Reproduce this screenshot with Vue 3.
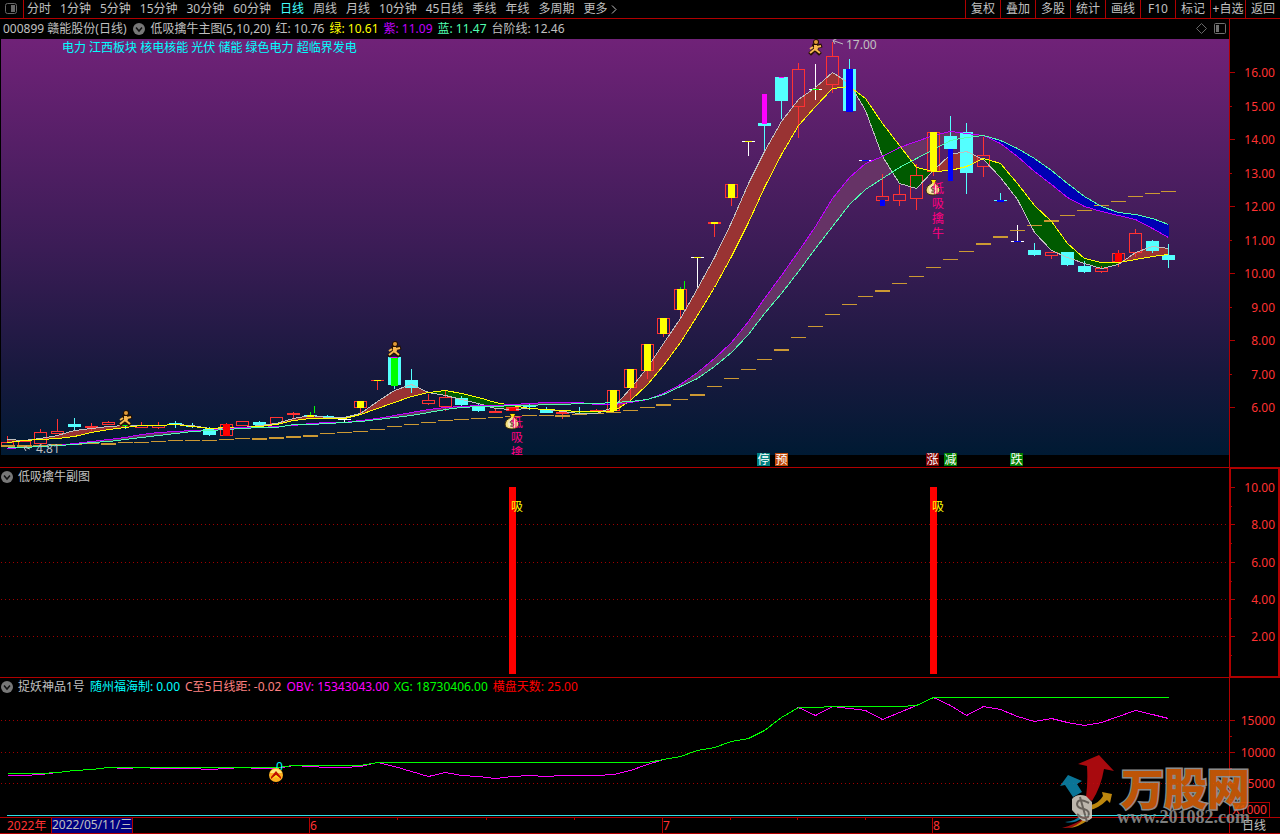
<script setup>
const periods = ['分时', '1分钟', '5分钟', '15分钟', '30分钟', '60分钟', '日线', '周线', '月线', '10分钟', '45日线', '季线', '年线', '多周期', '更多']
const tools = ['复权', '叠加', '多股', '统计', '画线', 'F10', '标记', '+自选', '返回']

const mainReadings = [
  { text: '红: 10.76', tone: 'plain' },
  { text: '绿: 10.61', tone: 'yellow' },
  { text: '紫: 11.09', tone: 'violet' },
  { text: '蓝: 11.47', tone: 'mint' },
  { text: '台阶线: 12.46', tone: 'plain' }
]
const volumeReadings = [
  { text: '随州福海制: 0.00', tone: 'cyan' },
  { text: 'C至5日线距: -0.02', tone: 'pink' },
  { text: 'OBV: 15343043.00', tone: 'magenta' },
  { text: 'XG: 18730406.00', tone: 'green' },
  { text: '横盘天数: 25.00', tone: 'red' }
]

const cx = n => Math.round(6.8 + 16.835 * n)
const px = n => cx(n) + 0.5

// [kind, body top, body bottom, high, low] per trading day
// kinds: h hollow rise, r filled rise, c filled fall, w unchanged
const days = [
  ['h', 442, 446, 436, 446], ['h', 441, 446, 441, 448], ['h', 432, 444, 429, 444], ['h', 431, 434, 419, 434],
  ['c', 424, 427, 418, 431], ['r', 426, 428, 423, 431], ['h', 422, 425, 421, 425], ['c', 425, 426, 425, 429],
  ['h', 425, 428, 422, 428], ['h', 425, 428, 422, 429], ['c', 423, 424, 421, 428], ['c', 426, 427, 423, 428],
  ['c', 429, 435, 427, 436], ['h', 424, 436, 423, 436], ['h', 421, 426, 421, 426], ['c', 422, 425, 421, 426],
  ['h', 417, 424, 417, 424], ['r', 413, 415, 412, 418], ['c', 415, 416, 412, 417], ['c', 416, 417, 415, 417],
  ['w', 419, 420, 419, 422], ['h', 401, 408, 401, 413], ['r', 380, 381, 380, 390], ['c', 357, 385, 357, 389],
  ['c', 380, 388, 369, 393], ['h', 400, 404, 394, 405], ['h', 397, 407, 390, 411], ['c', 398, 405, 396, 407],
  ['c', 407, 411, 403, 412], ['r', 411, 413, 408, 413], ['r', 407, 411, 407, 411], ['c', 406, 407, 403, 410],
  ['c', 409, 413, 407, 413], ['h', 412, 414, 411, 419], ['c', 411, 412, 407, 413], ['r', 410, 412, 409, 412],
  ['h', 390, 411, 390, 411], ['h', 369, 388, 369, 400], ['h', 344, 371, 344, 379], ['h', 318, 334, 318, 337],
  ['h', 289, 310, 289, 317], ['w', 257, 258, 257, 288], ['r', 222, 224, 222, 237], ['h', 184, 198, 184, 206],
  ['w', 141, 142, 141, 156], ['c', 123, 126, 123, 151], ['c', 77, 101, 77, 119], ['h', 69, 107, 63, 138],
  ['w', 89, 90, 64, 100], ['h', 56, 85, 42, 93], ['c', 69, 111, 59, 111], ['w', 160, 161, 160, 161],
  ['h', 196, 201, 174, 201], ['h', 194, 201, 185, 206], ['h', 175, 199, 164, 210], ['h', 132, 172, 132, 176],
  ['c', 136, 149, 116, 149], ['c', 132, 173, 123, 194], ['h', 155, 167, 137, 177], ['c', 200, 201, 193, 201],
  ['w', 241, 242, 225, 242], ['c', 250, 255, 243, 256], ['h', 252, 256, 252, 259], ['c', 252, 265, 252, 266],
  ['c', 266, 272, 261, 273], ['h', 268, 272, 266, 273], ['h', 253, 262, 250, 267], ['h', 233, 253, 229, 257],
  ['c', 241, 251, 240, 253], ['c', 255, 260, 244, 268]
]
const candles = days.map(([kind, top, bottom, high, low], n) => ({ kind, top, bottom, high, low, x: cx(n) }))

// Signal bars painted over the candles: [day, offset, width, top, bottom, tone]
const signals = [
  [13, -3, 7, 424, 436, 'red'], [18, 4, 1, 406, 413, 'green'], [18, -3, 7, 415, 417, 'yellow'], [18, 0, 1, 412, 415, 'green'],
  [7, -3, 7, 425, 426, 'green'], [21, -3, 7, 401, 408, 'yellow'], [22, -3, 7, 380, 381, 'yellow'], [23, -3, 7, 357, 386, 'green'],
  [23, -3, 7, 357, 358, 'magenta'], [30, -3, 7, 408, 411, 'red'], [36, -3, 7, 390, 411, 'yellow'], [37, -3, 7, 369, 388, 'yellow'],
  [38, -3, 7, 344, 371, 'yellow'], [39, -3, 7, 318, 334, 'yellow'], [40, -3, 7, 289, 310, 'yellow'], [40, 0, 1, 287, 289, 'green'],
  [40, 4, 1, 281, 289, 'green'], [41, -3, 7, 257, 258, 'yellow'], [42, -3, 7, 222, 224, 'yellow'], [43, -3, 7, 184, 198, 'yellow'],
  [44, -3, 7, 141, 142, 'yellow'], [45, -2, 5, 94, 124, 'magenta'], [46, -2, 5, 77, 78, 'magenta'], [48, -3, 7, 89, 90, 'green'],
  [50, -3, 7, 69, 112, 'blue'], [51, -3, 7, 160, 161, 'blue'], [52, -2, 5, 200, 206, 'blue'], [55, -3, 7, 132, 171, 'yellow'],
  [56, -2, 5, 149, 181, 'blue'], [59, -3, 7, 200, 202, 'blue'], [60, -3, 7, 241, 242, 'blue'], [66, -3, 7, 253, 262, 'red']
].map(([n, dx, w, top, bottom, tone]) => ({ x: cx(n) + dx, w, top, h: bottom - top, tone }))

const ma5 = [439, 440, 438, 435, 430, 428, 426, 425, 425, 425, 424, 425, 428, 428, 427, 425, 423, 418, 415, 417, 417, 413, 401, 390, 384, 392, 395, 399, 403, 408, 409, 408, 409, 411, 413, 413, 407, 388, 367, 343, 318, 288, 257, 222, 183, 151, 121, 99, 87, 72, 83, 110, 156, 183, 188, 170, 154, 151, 159, 177, 199, 232, 250, 257, 263, 268, 264, 252, 246, 248]
const ma10 = [442, 440, 439, 438, 436, 432, 429, 427, 425, 425, 424, 426, 428, 427, 427, 426, 424, 420, 418, 418, 418, 414, 408, 402, 396, 392, 390, 393, 397, 402, 405, 408, 409, 410, 411, 411, 411, 400, 384, 365, 342, 315, 287, 256, 222, 187, 154, 125, 106, 88, 86, 98, 123, 145, 167, 171, 170, 166, 158, 163, 183, 205, 221, 243, 258, 262, 262, 259, 256, 254]
const fast = [448, 447, 446, 445, 443, 441, 439, 437, 434, 432, 431, 430, 430, 428, 427, 427, 426, 425, 423, 422, 422, 420, 418, 415, 412, 409, 407, 406, 405, 405, 404, 403, 402, 402, 402, 404, 404, 402, 399, 393, 384, 372, 358, 342, 321, 298, 275, 251, 226, 198, 177, 163, 156, 147, 141, 135, 131, 133, 135, 143, 156, 171, 184, 197, 206, 211, 215, 219, 228, 237]
const slow = [447, 447, 446, 445, 444, 442, 441, 439, 437, 435, 433, 431, 430, 429, 428, 427, 427, 424, 424, 423, 422, 421, 419, 417, 415, 412, 409, 407, 406, 406, 405, 405, 404, 404, 403, 403, 402, 401, 399, 394, 386, 378, 366, 352, 334, 313, 293, 271, 248, 226, 204, 189, 178, 167, 158, 149, 140, 137, 135, 140, 148, 158, 170, 183, 196, 206, 212, 214, 218, 224]
const steps = [445, 445, 445, 444, 444, 443, 443, 442, 442, 441, 440, 440, 440, 439, 438, 438, 437, 436, 435, 433, 432, 431, 429, 426, 424, 422, 420, 419, 418, 417, 416, 415, 415, 415, 414, 413, 412, 410, 407, 404, 399, 394, 386, 378, 369, 359, 349, 337, 326, 314, 304, 296, 290, 283, 276, 267, 259, 251, 243, 236, 230, 225, 220, 215, 210, 205, 201, 196, 193, 191]
const thickSteps = new Set([0, 1, 2, 6, 15, 16, 17, 18, 33, 39, 41, 46, 52, 58, 59, 62])

const line = ys => ys.map((y, n) => `${px(n)},${y + 0.5}`).join(' ')

// Area between two curves, split where they cross
function bands(a, b) {
  const above = []
  const below = []
  for (let n = 0; n < a.length - 1; n++) {
    const d0 = b[n] - a[n]
    const d1 = b[n + 1] - a[n + 1]
    const x0 = px(n)
    const x1 = px(n + 1)
    if (d0 * d1 < 0) {
      const t = d0 / (d0 - d1)
      const xm = x0 + (x1 - x0) * t
      const ym = a[n] + (a[n + 1] - a[n]) * t
      ;(d0 > 0 ? above : below).push(`M${x0} ${a[n]}L${xm} ${ym}L${x0} ${b[n]}Z`)
      ;(d1 > 0 ? above : below).push(`M${x1} ${a[n + 1]}L${xm} ${ym}L${x1} ${b[n + 1]}Z`)
    } else if (d0 + d1 !== 0) {
      ;(d0 + d1 > 0 ? above : below).push(`M${x0} ${a[n]}L${x1} ${a[n + 1]}L${x1} ${b[n + 1]}L${x0} ${b[n]}Z`)
    }
  }
  return { above: above.join(''), below: below.join('') }
}
const shortBand = bands(ma5, ma10)
const longBand = bands(fast, slow)

const xg = [773, 773, 773, 772, 770, 769, 767, 767, 767, 767, 767, 767, 767, 767, 767, 767, 767, 765, 765, 765, 765, 765, 762, ...Array(16).fill(762), 759, 756, 750, 747, 741, 738, 730, 717, 707, 707, 706, 706, 706, 706, 706, 705, ...Array(15).fill(697)]
const obv = [775, 775, 774, 772, 770, 769, 767, 768, 767, 768, 768, 768, 769, 768, 767, 768, 768, 765, 766, 767, 767, 766, 762, 766, 771, 776, 772, 775, 776, 778, 776, 775, 776, 775, 775, 775, 774, 770, 764, 759, 756, 750, 747, 741, 738, 730, 717, 707, 715, 706, 708, 710, 719, 712, 705, 697, 705, 715, 706, 709, 716, 721, 718, 722, 725, 722, 716, 710, 714, 718]

const priceTicks = [
  [72, '16.00'], [106, '15.00'], [139, '14.00'], [173, '13.00'], [206, '12.00'], [240, '11.00'],
  [273, '10.00'], [307, '9.00'], [340, '8.00'], [374, '7.00'], [407, '6.00']
]
const signalTicks = [[487, '10.00'], [524, '8.00'], [562, '6.00'], [599, '4.00'], [636, '2.00']]
const volumeTicks = [[720, '15000'], [752, '10000'], [783, '5000']]

const tags = [
  { x: 757, text: '停', fill: '#008080' }, { x: 775, text: '预', fill: '#c04808' }, { x: 926, text: '涨', fill: '#800000' },
  { x: 944, text: '减', fill: '#008000' }, { x: 1010, text: '跌', fill: '#008000' }
]
const runners = [[119, 411], [388, 342], [809, 40]]
const bags = [[505, 414], [926, 180]]
const calls = [
  { x: 511, y: 427, chars: ['低', '吸', '擒'] },
  { x: 932, y: 193, chars: ['低', '吸', '擒', '牛'] }
]
const months = [[309, '6'], [662, '7'], [932, '8']]
const weekTicks = [397, 486, 574, 730, 797, 865]
</script>

<template>
  <div class="terminal">
    <nav class="toolbar">
      <button class="layout-btn" aria-label="布局">
        <svg width="13" height="12" viewBox="0 0 13 12"><rect x=".5" y=".5" width="11" height="10" rx="2" fill="none" stroke="#686868" /><rect x="6" y="2" width="4" height="7" fill="#686868" /></svg>
      </button>
      <div class="periods">
        <button v-for="p in periods" :key="p" :class="{ active: p === '日线' }">{{ p }}</button>
        <svg class="more" width="6" height="9" viewBox="0 0 6 9"><path d="M1 .5L5 4.500L1 8.500" fill="none" stroke="#c0c0c0" /></svg>
      </div>
      <div class="tools">
        <button v-for="t in tools" :key="t">{{ t }}</button>
      </div>
    </nav>

    <section class="panel">
      <div class="plot">
        <header class="info tall">
          <span>000899 赣能股份(日线)</span>
          <button class="fold" aria-label="指标菜单"><svg viewBox="0 0 12 12"><circle cx="6" cy="6" r="6" fill="#787878" /><path d="M3 4.500L6 8L9 4.500" fill="none" stroke="#111" stroke-width="1.500" /></svg></button>
          <span>低吸擒牛主图(5,10,20)</span>
          <span v-for="r in mainReadings" :key="r.text" :class="r.tone">{{ r.text }}</span>
          <svg class="corner" width="30" height="12" viewBox="0 0 30 12">
            <path d="M5.500 .5L10.500 5.500L5.500 10.500L.5 5.500Z" fill="none" stroke="#686868" />
            <rect x="18.500" y=".5" width="11" height="10" rx="1" fill="none" stroke="#707070" /><rect x="20" y="2" width="3" height="7" fill="#707070" />
          </svg>
        </header>
        <svg class="chart" viewBox="0 39 1229 428" preserveAspectRatio="none">
          <defs>
            <linearGradient id="dusk" x1="0" y1="0" x2="0" y2="1">
              <stop offset="0" stop-color="#702278" /><stop offset=".5" stop-color="#3b1c56" /><stop offset=".8" stop-color="#18193e" /><stop offset="1" stop-color="#001a33" />
            </linearGradient>
            <clipPath id="sky"><rect x="1" y="39" width="1228" height="416" /></clipPath>
          </defs>
          <rect x="1" y="39" width="1228" height="416" fill="url(#dusk)" />
          <text class="cyan" x="62" y="52">电力 江西板块 核电核能 光伏 储能 绿色电力 超临界发电</text>
          <g clip-path="url(#sky)" shape-rendering="crispEdges">
            <path :d="longBand.above" fill="#663366" />
            <path :d="longBand.below" fill="#0000b4" />
            <path :d="shortBand.above" fill="#993333" />
            <path :d="shortBand.below" fill="#005a00" />
            <g v-for="c in candles" :key="c.x" :class="['candle', c.kind]">
              <rect v-if="c.top > c.high" :x="c.x" :y="c.high" width="1" :height="c.top - c.high" />
              <rect v-if="c.low > c.bottom" :x="c.x" :y="c.bottom" width="1" :height="c.low - c.bottom" />
              <rect v-if="c.kind === 'h'" class="hollow" :x="c.x - 5.5" :y="c.top + 0.5" width="12" :height="c.bottom - c.top - 1" />
              <rect v-else :x="c.x - 6" :y="c.top" width="13" :height="c.bottom - c.top" />
            </g>
            <rect v-for="(y, n) in steps" :key="n" :x="cx(n) - 7" :y="y" width="15" :height="thickSteps.has(n) ? 2 : 1" fill="#cc9933" />
            <g fill="none">
              <polyline :points="line(ma5)" stroke="#c0c0c0" />
              <polyline :points="line(ma10)" stroke="#ffff00" />
              <polyline :points="line(fast)" stroke="#c000ff" />
              <polyline :points="line(slow)" stroke="#50ffb0" />
            </g>
            <rect v-for="(s, i) in signals" :key="i" :class="s.tone" :x="s.x" :y="s.top" :width="s.w" :height="s.h" />
          </g>
          <g fill="none" stroke="#c0c0c0">
            <path d="M843 44L833 40.500M837 38.500L833 40.500L835 44" />
            <path d="M30 449L24 447M27 446L24 447.500L26 451" />
          </g>
          <text x="846" y="49">17.00</text>
          <text x="36" y="453">4.81</text>
          <g v-for="[x, y] in runners" :key="x" :transform="`translate(${x} ${y})`">
            <g fill="none" stroke="#241000" stroke-width="4" stroke-linecap="square"><path d="M7 6L6 9L2 13M6 9L10 13M5 6L8 7L11 6" /><circle cx="7" cy="2" r="1" /></g>
            <g fill="none" stroke="#f8b850" stroke-width="2"><path d="M4 7L1 9" /><path d="M6 9L1 13M6 9L11 13M8 7L12 6" /></g>
            <path d="M5 5H8L9 9L7 11L5 9Z" fill="#f8b850" />
            <circle cx="7" cy="2" r="2" fill="#e09a38" />
          </g>
          <g v-for="[x, y] in bags" :key="x" :transform="`translate(${x} ${y})`">
            <path d="M5 0H10L9 3Q14 6 14 10Q13 15 7 15Q0 15 0 10Q0 6 6 3Z" fill="#f2e184" stroke="#3a2800" />
            <path d="M5 0H10L8 4Z" fill="#ffe800" />
            <circle cx="7" cy="9.500" r="4" fill="#f8edc8" />
            <path d="M9 7Q5 6 5 8Q5 9 7 9.500Q9 10 9 11Q8 13 5 12M7 6V13" fill="none" stroke="#70502c" />
          </g>
          <g class="call" clip-path="url(#sky)">
            <template v-for="c in calls" :key="c.x">
              <text v-for="(ch, i) in c.chars" :key="ch" :x="c.x" :y="c.y + i * 15">{{ ch }}</text>
            </template>
          </g>
          <g v-for="t in tags" :key="t.x">
            <rect :x="t.x" y="453" width="13" height="13" :fill="t.fill" />
            <text class="white" :x="t.x + 0.5" y="464">{{ t.text }}</text>
          </g>
        </svg>
      </div>
      <svg class="axis" viewBox="1229 19 51 448" preserveAspectRatio="none">
        <path class="rule" d="M1229.500 19V467" />
        <g v-for="([y, label], i) in priceTicks" :key="label">
          <path class="rule" :d="`M1230 ${y + 0.5}H${i % 2 ? 1232 : 1235}`" />
          <text x="1275" :y="y + 5">{{ label }}</text>
        </g>
      </svg>
    </section>

    <section class="panel">
      <div class="plot">
        <header class="info">
          <button class="fold" aria-label="指标菜单"><svg viewBox="0 0 12 12"><circle cx="6" cy="6" r="6" fill="#787878" /><path d="M3 4.500L6 8L9 4.500" fill="none" stroke="#111" stroke-width="1.500" /></svg></button>
          <span>低吸擒牛副图</span>
        </header>
        <svg class="chart" viewBox="0 485 1229 192" preserveAspectRatio="none">
          <path v-for="[y] in signalTicks.slice(1)" :key="y" class="grid" :d="`M1 ${y + 0.5}H1229`" />
          <g v-for="x in [509, 930]" :key="x">
            <rect class="red" :x="x" y="487" width="7" height="187" />
            <text class="yellow" :x="x + 2" y="511">吸</text>
          </g>
        </svg>
      </div>
      <svg class="axis" viewBox="1229 468 51 209" preserveAspectRatio="none">
        <path class="rule" d="M1229 468.500H1280M1229 676.500H1280" />
        <path class="rule" stroke-width="2" d="M1230 468V677M1279 468V677" />
        <g v-for="[y, label] in signalTicks" :key="label">
          <path class="rule" :d="`M1230 ${y + 0.5}H1235M1230 ${y + 19.5}H1232`" />
          <text x="1275" :y="y + 5">{{ label }}</text>
        </g>
      </svg>
    </section>

    <section class="panel last">
      <div class="plot">
        <header class="info">
          <button class="fold" aria-label="指标菜单"><svg viewBox="0 0 12 12"><circle cx="6" cy="6" r="6" fill="#787878" /><path d="M3 4.500L6 8L9 4.500" fill="none" stroke="#111" stroke-width="1.500" /></svg></button>
          <span>捉妖神品1号</span>
          <span v-for="r in volumeReadings" :key="r.text" :class="r.tone">{{ r.text }}</span>
        </header>
        <svg class="chart" viewBox="0 695 1229 122" preserveAspectRatio="none">
          <path v-for="[y] in volumeTicks" :key="y" class="grid" :d="`M1 ${y + 0.5}H1229`" />
          <g fill="none" shape-rendering="crispEdges">
            <polyline :points="line(obv)" stroke="#ff00ff" />
            <polyline :points="line(xg)" stroke="#00ff00" />
            <path d="M7 815.500H1169" stroke="#30e0e8" />
          </g>
          <text class="cyan" x="276" y="771">0</text>
          <circle cx="276" cy="775" r="7" fill="#ffb020" /><path d="M270 773A6.500 6.500 0 0 1 282 773Z" fill="#ffe878" />
          <path d="M271 777L276 771L281 777L281 779L276 775L271 779Z" fill="#c01000" /><path d="M276 775L280 778.500L276 777L272 778.500Z" fill="#ffe020" />
        </svg>
      </div>
      <svg class="axis" viewBox="1229 678 51 139" preserveAspectRatio="none">
        <path class="rule" d="M1229.500 678V817M1229 802.500H1269.500V817" />
        <g v-for="[y, label] in volumeTicks" :key="label">
          <path class="rule" :d="`M1230 ${y + 0.5}H1235M1230 ${y + 16.5}H1232`" />
          <text x="1275" :y="y + 5">{{ label }}</text>
        </g>
        <text x="1267" y="814">X1000</text>
      </svg>
    </section>

    <footer class="dates">
      <svg class="chart" viewBox="0 818 1229 15" preserveAspectRatio="none">
        <text class="tick" x="7" y="830">2022年</text>
        <rect x="51" y="818" width="82" height="15" fill="#000080" />
        <path class="rule" d="M51.500 818V833M132.500 818V833" />
        <text x="52" y="829">2022/05/11/三</text>
        <g v-for="[x, m] in months" :key="m">
          <path class="rule" :d="`M${x + 0.5} 818V833`" />
          <text class="tick" :x="x + 1" y="830">{{ m }}</text>
        </g>
        <path v-for="x in weekTicks" :key="x" class="rule" :d="`M${x + 0.5} 818V820`" />
      </svg>
      <span class="cycle">日线</span>
    </footer>

    <svg class="brand" width="204" height="80" viewBox="1056 752 204 80" opacity=".88">
      <path d="M1068 775L1060 786L1065 785L1073 797L1082 792L1077 784L1082 781Z" fill="#0c86ac" />
      <path d="M1099 755L1078 764L1087 766Q1088 783 1086 797L1092 801Q1101 787 1104 769L1114 771Z" fill="#c00c10" />
      <path d="M1102 792L1112 794L1110 803L1107 800Q1099 808 1090 810L1091 805Q1099 803 1103 796Z" fill="#d89a10" />
      <path d="M1087 816Q1077 824 1062 828Q1074 829 1086 821Z" fill="#b01010" />
      <path d="M1083 814Q1076 821 1065 822Q1074 824 1082 818Z" fill="#1088b0" />
      <path d="M1085 818Q1077 826 1069 828Q1079 827 1088 820Z" fill="#d89a10" />
      <path d="M1072 799Q1077 793 1086 796L1092 802L1092 818Q1086 824 1080 819L1072 810Z" fill="#d8d0c4" />
      <path d="M1089 803Q1078 797 1077 804Q1077 808 1084 809Q1091 811 1088 817Q1083 820 1077 814M1080 797L1087 822" fill="none" stroke="#756e66" stroke-width="2" />
      <text class="wordmark" x="1121" y="805">万股网</text>
      <text class="domain" x="1117" y="823">www.201082.com</text>
    </svg>
  </div>
</template>

<style>
html,
body {
  background: #000;
}
</style>

<style scoped>
.terminal {
  position: relative;
  display: grid;
  grid-template-rows: 19px 449fr 210fr 139fr 17px;
  height: 100vh;
  min-height: 560px;
  overflow: hidden;
  background: #000;
  color: #c0c0c0;
  font: 12px/16px "Noto Sans", "Noto Sans CJK SC", sans-serif;
}
button {
  padding: 0;
  border: 0;
  background: none;
  color: inherit;
  font: inherit;
  white-space: nowrap;
  cursor: pointer;
}
.toolbar {
  display: flex;
  border-bottom: 1px solid #b00000;
}
.layout-btn {
  width: 24px;
  padding-left: 5px;
  border-right: 1px solid #b00000;
  text-align: left;
}
.layout-btn svg {
  display: block;
}
.periods {
  display: flex;
  flex: 1;
  align-items: center;
  gap: 9px;
  min-width: 0;
  padding-left: 3px;
  overflow: hidden;
}
.periods .active {
  color: #4ff;
}
.more {
  margin-left: -6px;
}
.tools {
  display: flex;
}
.tools button {
  width: 35px;
  border-left: 1px solid #b00000;
}
.panel {
  display: grid;
  grid-template-columns: 1fr 51px;
  min-height: 0;
  border-bottom: 1px solid #b00000;
}
.panel.last {
  border-bottom: 0;
}
.plot {
  display: flex;
  flex-direction: column;
  min-width: 0;
  min-height: 0;
}
.info {
  display: flex;
  flex: none;
  align-items: center;
  gap: 5px;
  height: 17px;
  padding-left: 1px;
  white-space: nowrap;
}
.info.tall {
  height: 20px;
  padding: 0 3px;
}
.fold {
  width: 12px;
  height: 12px;
}
.tall .fold {
  margin: 0 1px;
}
.fold svg {
  display: block;
}
.corner {
  margin-left: auto;
}
.chart {
  display: block;
  flex: 1;
  width: 100%;
  min-height: 0;
}
.axis {
  display: block;
  width: 51px;
  height: 100%;
  min-height: 0;
}
text {
  fill: #c0c0c0;
}
.axis text,
.tick {
  fill: #ff3232;
}
.axis text {
  text-anchor: end;
}
.rule {
  fill: none;
  stroke: #b00000;
  shape-rendering: crispEdges;
}
.grid {
  stroke: #a00000;
  stroke-dasharray: 1 3;
  shape-rendering: crispEdges;
}
.candle.h,
.candle.r {
  fill: #ff3232;
}
.candle.c {
  fill: #54ffff;
}
.candle.w {
  fill: #fff;
}
.candle .hollow {
  fill: none;
  stroke: #ff3232;
}
.call text {
  fill: #ff0080;
}
.white {
  fill: #fff;
}
.cyan {
  color: #0ff;
  fill: #0ff;
}
.yellow {
  color: #ff0;
  fill: #ff0;
}
.violet {
  color: #c000ff;
}
.mint {
  color: #50ffb0;
}
.pink {
  color: #ff8080;
}
.magenta {
  color: #f0f;
  fill: #f0f;
}
.green {
  color: #0f0;
  fill: #0f0;
}
.red {
  color: #f00;
  fill: #f00;
}
.blue {
  fill: #00f;
}
.dates {
  display: grid;
  grid-template-columns: 1fr 51px;
  border-top: 1px solid #b00000;
  border-bottom: 1px solid #b00000;
}
.dates .chart {
  height: 15px;
}
.cycle {
  padding-left: 12px;
  border-left: 1px solid #b00000;
  line-height: 15px;
}
.brand {
  position: absolute;
  right: 20px;
  bottom: 2px;
  pointer-events: none;
}
.wordmark {
  fill: #d86008;
  stroke: #a0a0a0;
  stroke-width: 3px;
  paint-order: stroke;
  font: 900 43px "Noto Sans CJK SC", sans-serif;
}
.domain {
  fill: #909090;
  font: bold 18px "Liberation Serif", serif;
}
</style>
